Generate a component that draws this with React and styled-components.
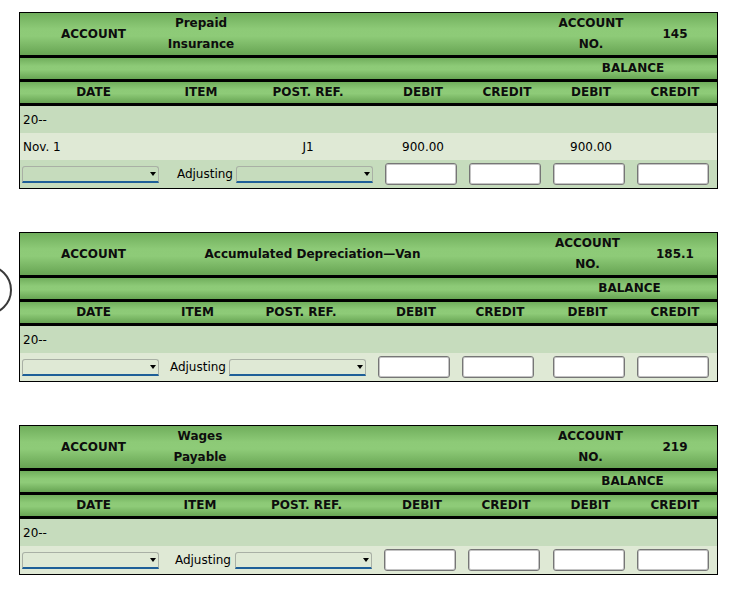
import styled, { createGlobalStyle } from 'styled-components'

const GlobalStyle = createGlobalStyle`
    body {
        margin: 0;
        background: #ffffff;
        font-family: "DejaVu Sans", Verdana, sans-serif;
        font-size: 12px;
        color: #000;
    }
`

const Contas = [{
    titulo: "Prepaid Insurance",
    tituloSpan: 1,
    numero: "145",
    colunas: [147, 68, 146, 84, 84, 84, 84],
    linhas: [{ data: "Nov. 1", ref: "J1", debito: "900.00", saldoDebito: "900.00" }]
}, {
    titulo: "Accumulated Depreciation\u2014Van",
    tituloSpan: 3,
    numero: "185.1",
    colunas: [147, 61, 146, 84, 84, 91, 84],
    linhas: []
}, {
    titulo: "Wages Payable",
    tituloSpan: 1,
    numero: "219",
    colunas: [147, 66, 147, 84, 84, 85, 84],
    linhas: []
}]

const Page = styled.div`
    position: relative;
    display: flex;
    flex-direction: column;
    gap: 43px;
    padding: 12px 0 20px 19px;
`

const Circulo = styled.svg`
    position: absolute;
    left: 0;
    top: 263px;
`

const Tabela = styled.div`
    width: 699px;
    box-sizing: border-box;
    border: 1px solid #000;
    display: flex;
    flex-direction: column;
`

const Linha = styled.div`
    display: grid;
    grid-template-columns: ${p => p.$cols.map(c => c + 'px').join(' ')};
    height: ${p => p.$h}px;
`

const Cabecalho = styled(Linha)`
    background: linear-gradient(#70ae5c 0%, #8dca77 38%, #8ecb78 55%, #67a453 100%);
    border-bottom: 3px solid #000;
    font-weight: bold;
    color: #0d0d0d;
    line-height: 21px;
`

const Dados = styled(Linha)`
    background: ${p => p.$clara ? '#dfe9d5' : '#c6dcbd'};
`

const Celula = styled.div`
    grid-column: ${p => p.$col} / span ${p => p.$span || 1};
    display: flex;
    align-items: center;
    justify-content: ${p => p.$align || 'center'};
    text-align: center;
    padding: ${p => p.$pad || '0'};
    white-space: ${p => p.$nowrap ? 'nowrap' : 'normal'};
    min-width: 0;
`

const Dropdown = styled.div`
    position: relative;
    width: 135px;
    height: 14px;
    box-sizing: content-box;
    border: 1px solid #a9b0a5;
    border-bottom: 2px solid #1e5f98;
    border-radius: 3px 3px 0 0;
`

const Seta = styled.span`
    position: absolute;
    right: 2px;
    top: 5px;
    width: 0;
    height: 0;
    border-left: 3px solid transparent;
    border-right: 3px solid transparent;
    border-top: 4px solid #000;
`

const Campo = styled.div`
    width: 72px;
    height: 22px;
    box-sizing: border-box;
    background: #fff;
    border: 1px solid #767676;
    border-radius: 3px;
    box-shadow: inset 0 0 0 1px #c4c4c4;
`

const Conta = ({ conta }) => {
    const cols = conta.colunas
    const fim = 2 + conta.tituloSpan
    return (
        <Tabela>
            <Cabecalho $cols={cols} $h={42}>
                <Celula $col={1}>ACCOUNT</Celula>
                <Celula $col={2} $span={conta.tituloSpan}>{conta.titulo}</Celula>
                {fim < 6 && <Celula $col={fim} $span={6 - fim}></Celula>}
                <Celula $col={6}>ACCOUNT<br />NO.</Celula>
                <Celula $col={7}>{conta.numero}</Celula>
            </Cabecalho>
            <Cabecalho $cols={cols} $h={21}>
                <Celula $col={6} $span={2}>BALANCE</Celula>
            </Cabecalho>
            <Cabecalho $cols={cols} $h={21}>
                <Celula $col={1}>DATE</Celula>
                <Celula $col={2}>ITEM</Celula>
                <Celula $col={3}>POST. REF.</Celula>
                <Celula $col={4}>DEBIT</Celula>
                <Celula $col={5}>CREDIT</Celula>
                <Celula $col={6}>DEBIT</Celula>
                <Celula $col={7}>CREDIT</Celula>
            </Cabecalho>
            <Dados $cols={cols} $h={27}>
                <Celula $col={1} $align="flex-start" $pad="0 0 0 3px">20--</Celula>
            </Dados>
            {conta.linhas.map((l, i) => (
                <Dados key={i} $cols={cols} $h={27} $clara={(i + 1) % 2 === 1}>
                    <Celula $col={1} $align="flex-start" $pad="0 0 0 3px">{l.data}</Celula>
                    <Celula $col={3}>{l.ref}</Celula>
                    <Celula $col={4}>{l.debito}</Celula>
                    <Celula $col={6}>{l.saldoDebito}</Celula>
                </Dados>
            ))}
            <Dados $cols={cols} $h={28} $clara={(conta.linhas.length + 1) % 2 === 1}>
                <Celula $col={1} $align="flex-start" $pad="0 0 0 2px">
                    <Dropdown><Seta /></Dropdown>
                </Celula>
                <Celula $col={2} $align="flex-end" $pad="0 2px 0 0" $nowrap>Adjusting</Celula>
                <Celula $col={3} $align="flex-end" $pad="0 8px 0 0">
                    <Dropdown><Seta /></Dropdown>
                </Celula>
                {[4, 5, 6, 7].map(c => (
                    <Celula key={c} $col={c} $align="flex-end" $pad="0 8px 0 0">
                        <Campo />
                    </Celula>
                ))}
            </Dados>
        </Tabela>
    )
}

const App = () => {
    return (
        <>
            <GlobalStyle />
            <Page>
                <Circulo width="14" height="54" viewBox="0 0 14 54">
                    <circle cx="-13" cy="27" r="24" fill="none" stroke="#3a3a3a" strokeWidth="2" />
                </Circulo>
                {Contas.map((conta) => (
                    <Conta key={conta.numero} conta={conta} />
                ))}
            </Page>
        </>
    )
}

export default App
